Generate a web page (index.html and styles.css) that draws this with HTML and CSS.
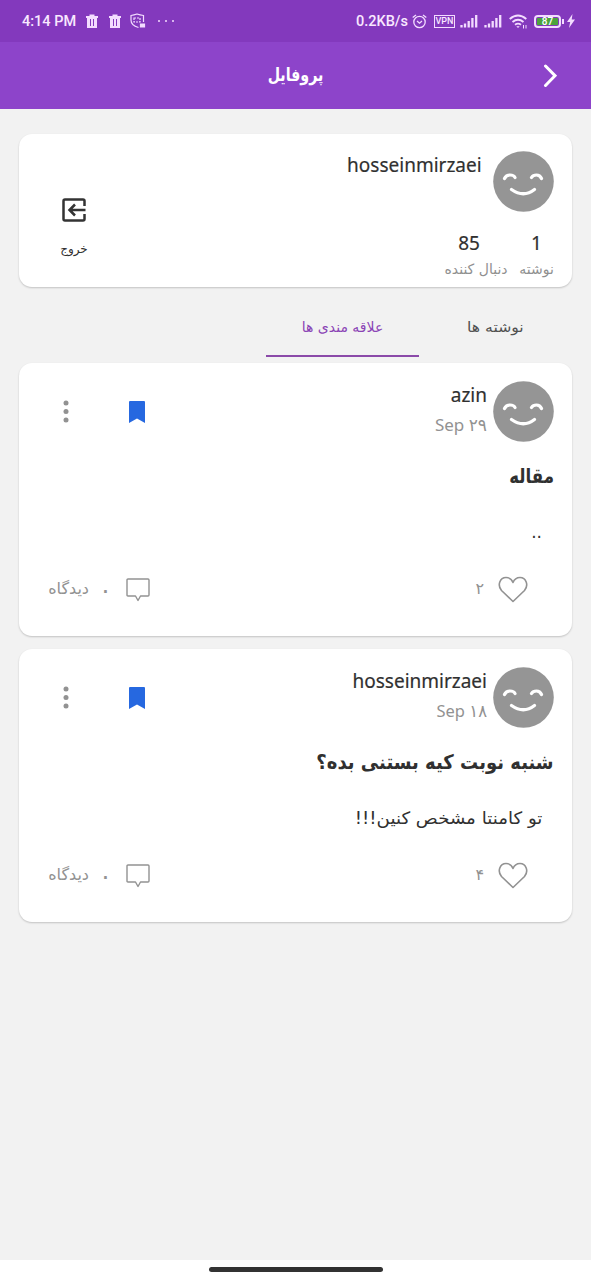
FILE: index.html
```html
<!DOCTYPE html>
<html lang="fa" dir="rtl">
<head>
<meta charset="utf-8">
<title>پروفایل</title>
<link rel="stylesheet" href="styles.css">
</head>
<body>
<svg class="defs" width="0" height="0">
  <symbol id="face" viewBox="0 0 61 61">
    <circle cx="30.500" cy="30.500" r="30.300" fill="#959595"/>
    <path d="M11.500 27.500q1.500-3.500 5.500-3.500t5 2.500M38.500 26.500q1.500-2.500 5-2.500t5 3.500M18.500 38.500q12 8.500 23 0" fill="none" stroke="#fff" stroke-width="3.200" stroke-linecap="round"/>
  </symbol>
  <symbol id="trash" viewBox="0 0 12 14">
    <path d="M0 2h3.500V.5h5V2H12v2H0zM1 4h10v10H1z" fill="#f3dcff"/>
    <path d="M4.500 5v7M7.500 5v7" stroke="#8339bd" stroke-width="1"/>
  </symbol>
  <symbol id="signal" viewBox="0 0 18 14">
    <path d="M1.500 13.500v-2.500M5 13.500v-4M8.700 13.500V7M12.400 13.500V4M16.200 13.500V1" stroke="#f3dcff" stroke-width="2.300"/>
  </symbol>
  <symbol id="mark" viewBox="0 0 16 22">
    <path d="M1 0h14q1 0 1 1v21l-8-4.500L0 22V1q0-1 1-1z" fill="#2668e0"/>
  </symbol>
  <symbol id="dots" viewBox="0 0 6 23">
    <g fill="#929292"><circle cx="3" cy="3" r="2.500"/><circle cx="3" cy="11.500" r="2.500"/><circle cx="3" cy="20" r="2.500"/></g>
  </symbol>
  <symbol id="heart" viewBox="0 0 30 27">
    <path d="M15 25.500 3.500 14.500C-1 9 2 1.500 8 1.500c4 0 6 2.500 7 5 1-2.500 3-5 7-5 6 0 9 7.500 4.500 13z" fill="none" stroke="#929292" stroke-width="1.600" stroke-linejoin="round"/>
  </symbol>
  <symbol id="bubble" viewBox="0 0 24 24">
    <path d="M2 1h20q1 0 1 1v15q0 1-1 1h-7.500L12 22.500 9.500 18H2q-1 0-1-1V2q0-1 1-1z" fill="none" stroke="#929292" stroke-width="1.400" stroke-linejoin="round"/>
  </symbol>
</svg>

<div class="screen">
  <div class="status" dir="ltr">
    <span class="clock">4:14 PM</span>
    <svg class="trash" width="12" height="14"><use href="#trash"/></svg>
    <svg class="trash" width="12" height="14"><use href="#trash"/></svg>
    <svg class="shield" width="16" height="16" viewBox="0 0 16 16" fill="none" stroke="#f3dcff" stroke-width="1.200"><path d="M8.500 14.500Q1 12.500 1 7V2.500Q4 2 7 1q3 1 6.500 1.500V9"/><path d="M4 5h6v4H4z" stroke-dasharray="2 1"/><path d="M10.500 11h4v3h-4z" fill="#f3dcff"/></svg>
    <span class="more"><i></i><i></i><i></i></span>
    <span class="speed">0.2KB/s</span>
    <svg class="alarm" width="15" height="15" viewBox="0 0 15 15" fill="none" stroke="#f3dcff" stroke-width="1.300"><circle cx="7.500" cy="8" r="5.700"/><path d="M.7 3.500 4 .9M14.300 3.500 11 .9M5 7l2.500 2.200L10 7"/></svg>
    <span class="vpn">VPN</span>
    <svg class="sig" width="18" height="14"><use href="#signal"/></svg>
    <svg class="sig" width="18" height="14"><use href="#signal"/></svg>
    <svg class="wifi" width="19" height="15" viewBox="0 0 19 15" fill="none" stroke="#f3dcff" stroke-width="1.900"><path d="M.7 5Q9 -2 17.300 5M3.500 8Q9 3.500 14.500 8M6 10.700Q9 8.500 12 10.700"/><path d="M7.300 12.300h3.400L9 14z" fill="#f3dcff" stroke="none"/><path d="M14.500 11v3.500M17 11v3.500" stroke-width="1"/></svg>
    <span class="battery"><b>87</b></span>
    <svg class="bolt" width="8" height="14" viewBox="0 0 8 14"><path d="M5.500 0 0 8h3.200L2 14l6-8.500H4.700z" fill="#f3dcff"/></svg>
  </div>

  <header class="bar">
    <svg class="back" width="14" height="24" viewBox="0 0 14 24"><path d="m2.500 2 9.500 9.700L2.500 21.500" fill="none" stroke="#fff" stroke-width="3" stroke-linecap="round"/></svg>
    <h1>پروفایل</h1>
  </header>

  <section class="card profile">
    <div class="info">
      <div class="who"><svg class="avatar" width="61" height="61"><use href="#face"/></svg><span class="name">hosseinmirzaei</span></div>
      <div class="stats">
        <div class="stat s1"><span class="num">1</span><span class="label">نوشته</span></div>
        <div class="stat s2"><span class="num">85</span><span class="label">دنبال کننده</span></div>
      </div>
    </div>
    <div class="exit">
      <svg width="24" height="24" viewBox="0 0 24 24" fill="none" stroke="#333" stroke-width="2.500"><path d="M22.500 8V3q0-1.500-1.500-1.500H3Q1.500 1.500 1.500 3v18q0 1.500 1.500 1.500h18q1.500 0 1.500-1.500v-5M23.500 12H8M13 6.500 7.500 12l5.500 5.500"/></svg>
      <span>خروج</span>
    </div>
  </section>

  <nav class="tabs"><span class="tab"><em class="t1">نوشته ها</em></span><span class="tab active"><em class="t2">علاقه مندی ها</em></span></nav>

  <article class="card post">
    <div class="head">
      <svg class="avatar" width="61" height="61"><use href="#face"/></svg>
      <div class="meta"><span class="name">azin</span><span class="date" dir="ltr">Sep ۲۹</span></div>
      <svg class="mark" width="16" height="22"><use href="#mark"/></svg>
      <svg class="dots" width="6" height="23"><use href="#dots"/></svg>
    </div>
    <h2><em class="h-a">مقاله</em></h2>
    <p><em>..</em></p>
    <div class="foot">
      <svg width="30" height="27"><use href="#heart"/></svg><span class="likes">۲</span>
      <svg class="bubble" width="24" height="24"><use href="#bubble"/></svg><span class="zero">۰</span><span class="comments">دیدگاه</span>
    </div>
  </article>

  <article class="card post">
    <div class="head">
      <svg class="avatar" width="61" height="61"><use href="#face"/></svg>
      <div class="meta"><span class="name">hosseinmirzaei</span><span class="date d-b" dir="ltr">Sep ۱۸</span></div>
      <svg class="mark" width="16" height="22"><use href="#mark"/></svg>
      <svg class="dots" width="6" height="23"><use href="#dots"/></svg>
    </div>
    <h2><em class="h-b">شنبه نوبت کیه بستنی بده؟</em></h2>
    <p><em class="p-b">تو کامنتا مشخص کنین!!!</em></p>
    <div class="foot">
      <svg width="30" height="27"><use href="#heart"/></svg><span class="likes">۴</span>
      <svg class="bubble" width="24" height="24"><use href="#bubble"/></svg><span class="zero">۰</span><span class="comments">دیدگاه</span>
    </div>
  </article>

  <footer class="gesture"><i></i></footer>
</div>
</body>
</html>
```
FILE: styles.css
```css
* { box-sizing: border-box; margin: 0; padding: 0; }
body { font-family: "Noto Sans", "DejaVu Sans", sans-serif; color: #303030; background: #f2f2f2; }
.defs { display: block; position: absolute; }
em, i { font-style: normal; }
em { display: inline-block; white-space: nowrap; transform-origin: right; }
svg { flex: none; display: block; }
.screen { width: 591px; height: 1280px; display: flex; flex-direction: column; overflow: hidden; }

.status { height: 42px; background: #8339bd; color: #f9e8ff; display: flex; align-items: center; padding-left: 22px; font: 500 14.500px/42px Roboto, sans-serif; flex: none; }
.clock { width: 64px; white-space: nowrap; padding-top: 2px; }
.trash { margin-right: 11px; }
.shield { margin-left: -2px; margin-right: 12px; }
.more { display: flex; gap: 5px; width: 198px; }
.more i { width: 2px; height: 2px; background: #f3dcff; border-radius: 1px; }
.speed { width: 56px; white-space: nowrap; padding-top: 1px; }
.alarm { margin-right: 7px; }
.vpn { width: 21px; height: 13px; border: 1px solid #f3dcff; font: 500 9px/11px Roboto, sans-serif; text-align: center; margin-right: 5px; }
.sig { margin-right: 6px; }
.wifi { margin-left: 1px; margin-right: 6px; }
.battery { width: 27px; height: 13px; border: 2px solid #f3dcff; border-radius: 4px; padding: 1px; display: flex; position: relative; margin-right: 6px; }
.battery::after { content: ""; position: absolute; left: 26px; top: 2px; width: 2px; height: 5px; background: #f3dcff; }
.battery b { flex: 1; background: #4ca33c; font: 500 10px/8px Roboto, sans-serif; text-align: center; color: #fff; }

.bar { height: 67px; background: #8d44ca; display: grid; grid-template-columns: 48px 1fr 48px; align-items: center; flex: none; }
.back { margin-right: 34px; }
.bar h1 { color: #fff; text-align: center; font: bold 18px/30px "DejaVu Sans", sans-serif; transform: scaleX(.79); padding-bottom: 1px; }

.card { background: #fff; width: 553px; margin: 0 19px; border-radius: 13px; box-shadow: 0 1px 2px rgba(0,0,0,.2); flex: none; }
.profile { height: 153px; margin-top: 25px; padding: 17px 18px; display: flex; justify-content: space-between; }
.who { display: flex; gap: 11px; height: 77px; }
.name { font-size: 20px; line-height: 28px; display: block; transform: scaleX(.95); transform-origin: right; -webkit-text-stroke: .2px; }
.stats { display: flex; gap: 11px; }
.stat { display: flex; flex-direction: column; align-items: center; }
.s1 { width: 35px; }
.s2 { width: 64px; }
.num { font-size: 19px; line-height: 30px; -webkit-text-stroke: .2px; }
.s2 .num { width: 22px; }
.label { font: 14px/22px "DejaVu Sans", sans-serif; color: #909090; white-space: nowrap; }
.s2 .num { width: auto; padding-right: 14px; }
.exit { width: 30px; margin: 47px 0 0 22px; display: flex; flex-direction: column; align-items: center; gap: 15px; }
.exit span { font: 12px/24px "DejaVu Sans", sans-serif; }

.tabs { display: flex; height: 76px; padding: 0 19px; flex: none; }
.tab { width: 153px; height: 70px; padding-top: 28px; text-align: center; font: 14px/24px "DejaVu Sans", sans-serif; color: #505050; }
.t1 { transform: scaleX(1.12); transform-origin: center; }
.active { color: #8a43b5; border-bottom: 2px solid #8b4aa9; }

.post { height: 273px; padding: 18px; margin-bottom: 13px; }
.head { display: flex; height: 79px; }
.meta { width: 330px; margin-right: 6px; }
.date { display: block; font-size: 17px; line-height: 32px; color: #929292; text-align: right; }
.d-b { transform: scaleX(.97); transform-origin: right; }
.mark { margin: 20px 12px 0 0; }
.dots { margin: 19px 60px 0 0; }
.post h2 { font: bold 20px/32px "DejaVu Sans", sans-serif; height: 56px; }
.h-a { transform: scaleX(.83); }
.h-b { transform: scaleX(.9); }
.post p { font: 17px/32px "DejaVu Sans", sans-serif; height: 54px; padding: 0 12px; }
.p-b { transform: scaleX(1.07); }
.foot { display: flex; align-items: center; height: 39px; padding-right: 26px; color: #929292; font: 16px/30px "DejaVu Sans", sans-serif; }
.likes { margin-right: 14px; width: 10px; padding-bottom: 2px; }
.bubble { margin-right: 324px; }
.zero { margin-right: 14px; width: 13px; font-size: 24px; }
.comments { margin-right: 10px; padding-bottom: 2px; }

.gesture { height: 20px; background: #fff; margin-top: auto; display: flex; justify-content: center; align-items: center; flex: none; padding: 0 0 2px; }
.gesture i { width: 174px; height: 5px; border-radius: 3px; background: #333; }
```
